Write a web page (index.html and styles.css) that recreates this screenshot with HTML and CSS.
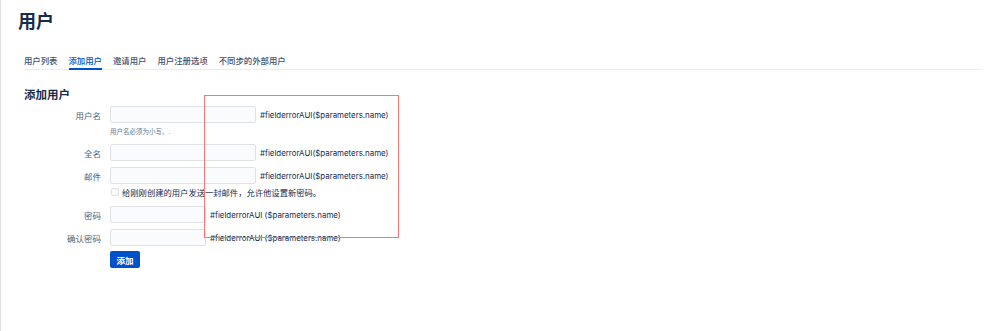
FILE: index.html
```html
<!DOCTYPE html>
<html lang="zh-CN">
<head>
    <meta charset="UTF-8">
    <title>用户</title>
    <link rel="stylesheet" href="styles.css">
</head>
<body>
    <div class="page">
        <h1 class="page-title">用户</h1>

        <div class="content">
            <nav class="tabs">
                <a class="tab">用户列表</a>
                <a class="tab active">添加用户</a>
                <a class="tab">邀请用户</a>
                <a class="tab">用户注册选项</a>
                <a class="tab">不同步的外部用户</a>
            </nav>

            <h2 class="section-title">添加用户</h2>

            <form class="user-form">
                <div class="row">
                    <label class="label">用户名</label>
                    <input class="field" type="text">
                    <span class="error">#fielderrorAUI($parameters.name)</span>
                </div>
                <div class="help">用户名必须为小写。.</div>

                <div class="row">
                    <label class="label">全名</label>
                    <input class="field" type="text">
                    <span class="error">#fielderrorAUI($parameters.name)</span>
                </div>

                <div class="row">
                    <label class="label">邮件</label>
                    <input class="field" type="text">
                    <span class="error">#fielderrorAUI($parameters.name)</span>
                </div>

                <div class="check-row">
                    <span class="box"></span>
                    <span class="check-text">给刚刚创建的用户发送一封邮件，允许他设置新密码。</span>
                </div>

                <div class="row">
                    <label class="label">密码</label>
                    <input class="field short" type="password">
                    <span class="error">#fielderrorAUI ($parameters.name)</span>
                </div>

                <div class="row">
                    <label class="label">确认密码</label>
                    <input class="field short" type="password">
                    <span class="error">#fielderrorAUI ($parameters.name)</span>
                </div>

                <div class="actions">
                    <button class="btn" type="button">添加</button>
                </div>
            </form>
        </div>

        <!-- annotation box over the error messages -->
        <div class="mark"></div>
    </div>
</body>
</html>
```

FILE: styles.css
```css
body {
    margin: 0;
    padding: 0;
    background-color: #ffffff;
    font-family: Inter, "Noto Sans CJK SC", sans-serif;
    color: #172b4d;
}

.page {
    position: relative;
    height: 331px;
    border-left: 1px solid #dcdfe4;
    box-sizing: border-box;
}

.page-title {
    margin: 0;
    padding: 11px 0 0 17px;
    font-size: 18px;
    line-height: 22px;
    font-weight: 600;
}

.content {
    padding: 0 17px 0 23px;
}

.tabs {
    display: flex;
    gap: 11px;
    margin-top: 22px;
    border-bottom: 1px solid #ebecf0;
}

.tab {
    padding: 0 0 1px;
    font-size: 8.4px;
    line-height: 12px;
    font-weight: 500;
    color: #42526e;
    border-bottom: 2px solid transparent;
    margin-bottom: -1px;
}

.tab.active {
    color: #0052cc;
    border-bottom-color: #0052cc;
}

.section-title {
    margin: 18px 0 0;
    font-size: 11.5px;
    line-height: 14px;
    font-weight: 600;
}

.user-form {
    margin-top: 4px;
}

.row {
    display: flex;
    align-items: center;
    height: 17px;
    margin-bottom: 6px;
}

.label {
    width: 77px;
    margin-right: 9px;
    text-align: right;
    font-size: 8.5px;
    color: #505f79;
}

.field {
    width: 146px;
    height: 17px;
    margin: 0 4px 0 0;
    padding: 0 4px;
    box-sizing: border-box;
    background-color: #fafbfc;
    border: 1px solid #dfe1e6;
    border-radius: 2px;
}

.field.short {
    width: 96px;
}

.error {
    font-size: 7.9px;
    color: #172b4d;
    white-space: nowrap;
}

.help {
    margin: -2px 0 7px 86px;
    font-size: 6.5px;
    line-height: 10px;
    color: #6b778c;
}

.check-row {
    display: flex;
    align-items: center;
    height: 12px;
    margin: -4px 0 8px 87px;
}

.box {
    width: 6px;
    height: 6px;
    border: 1px solid #dfe1e6;
    border-radius: 2px;
    background-color: #fafbfc;
    margin-right: 3px;
}

.check-text {
    font-size: 8.3px;
    color: #172b4d;
}

.actions {
    display: flex;
    margin: -1px 0 0 86px;
}

.btn {
    width: 30px;
    height: 17px;
    padding: 0;
    border: none;
    border-radius: 2px;
    background-color: #0052cc;
    color: #ffffff;
    font-family: Inter, "Noto Sans CJK SC", sans-serif;
    font-size: 8.5px;
    font-weight: 600;
}

.mark {
    position: absolute;
    left: 203px;
    top: 95px;
    width: 195px;
    height: 143px;
    box-sizing: border-box;
    border: 1px solid #ff7373;
}
```
